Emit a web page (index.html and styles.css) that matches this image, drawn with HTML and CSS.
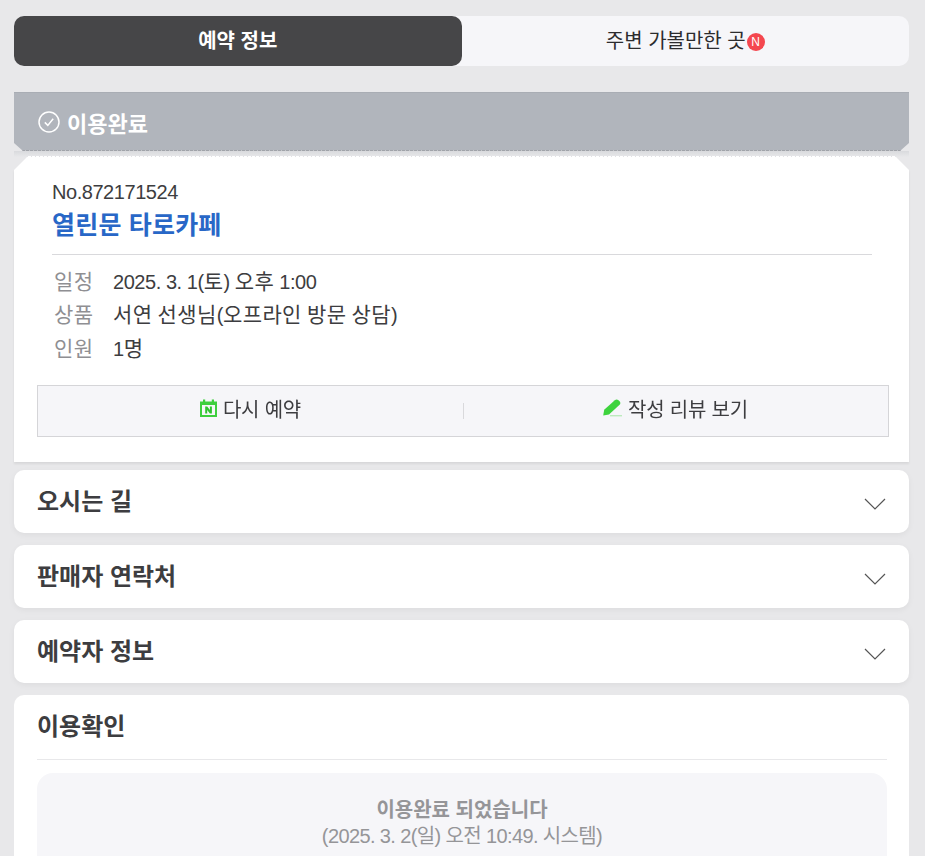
FILE: index.html
```html
<!DOCTYPE html>
<html lang="ko">
<head>
<meta charset="utf-8">
<title>예약 정보</title>
<link rel="stylesheet" href="styles.css">
</head>
<body>
<div class="page">
  <nav class="tabs">
    <a class="tab tab-on">예약 정보</a>
    <a class="tab">주변 가볼만한 곳<span class="new">N</span></a>
  </nav>

  <div class="status">
    <svg class="status-icon" width="22" height="22" viewBox="0 0 22 22" fill="none" stroke="#fff" stroke-width="1.5"><circle cx="11" cy="11" r="10"/><path d="M6.800 11.400l3 3 5.400-6.600"/></svg>
    <span>이용완료</span>
  </div>
  <div class="perforation"></div>

  <div class="ticket-wrap">
    <section class="ticket">
      <div class="ticket-head">
        <div class="number">No.872171524</div>
        <h1 class="shop">열린문 타로카페</h1>
      </div>
      <dl class="info">
        <div class="info-row"><dt>일정</dt><dd>2025. 3. 1(<span class="ko">토</span>) <span class="ko">오후</span> 1:00</dd></div>
        <div class="info-row"><dt>상품</dt><dd><span class="ko">서연</span> <span class="ko">선생님</span>(<span class="ko">오프라인</span> <span class="ko">방문</span> <span class="ko">상담</span>)</dd></div>
        <div class="info-row"><dt>인원</dt><dd>1<span class="ko">명</span></dd></div>
      </dl>
      <div class="actions">
        <a class="action">
          <svg width="17" height="18" viewBox="0 0 17 18"><path fill="#3ecf3e" d="M0 2.500h3V0.500h2.200v2h6.600V0.500H14v2h3V18H0z"/><rect x="2" y="6" width="13" height="10" fill="#f6f6f9"/><path fill="#2fc42f" d="M5.200 7.600h2l2.700 3.500V7.600h2v7h-2L7.200 11v3.600h-2z"/></svg>
          <span>다시 예약</span>
        </a>
        <a class="action">
          <svg width="19" height="18" viewBox="0 0 19 18"><path fill="#3ed33e" d="M0.200 16.500L1.200 10.800 11.800 1.200Q13.500 -.2 15.200 1L16.800 2.500Q18 4.200 16.600 5.800L6 15.400z"/><rect x="7" y="16.300" width="12" height="1" fill="#a6e6a6"/></svg>
          <span>작성 리뷰 보기</span>
        </a>
      </div>
    </section>
  </div>

  <section class="fold"><h2>오시는 길</h2><svg class="chev" width="22" height="12" viewBox="0 0 22 12" fill="none" stroke="#555" stroke-width="1.200"><path d="M1 1l10 10L21 1"/></svg></section>
  <section class="fold"><h2>판매자 연락처</h2><svg class="chev" width="22" height="12" viewBox="0 0 22 12" fill="none" stroke="#555" stroke-width="1.200"><path d="M1 1l10 10L21 1"/></svg></section>
  <section class="fold"><h2>예약자 정보</h2><svg class="chev" width="22" height="12" viewBox="0 0 22 12" fill="none" stroke="#555" stroke-width="1.200"><path d="M1 1l10 10L21 1"/></svg></section>

  <section class="confirm">
    <h2>이용확인</h2>
    <div class="confirm-box">
      <strong>이용완료 되었습니다</strong>
      <p>(2025. 3. 2(일) 오전 10:49. 시스템)</p>
    </div>
  </section>
</div>
</body>
</html>
```

FILE: styles.css
```css
* { box-sizing: border-box; }
html, body { margin: 0; height: 856px; overflow: hidden; }
body {
  background: #e8e8ea;
  font-family: "Liberation Sans", "Noto Sans CJK KR", sans-serif;
  color: #3d3d40;
}
.page { padding: 16px 16px 0 14px; }

.tabs { display: flex; height: 50px; background: #f6f6f9; border-radius: 10px; }
.tab {
  flex: 1; display: flex; align-items: center; justify-content: center;
  padding-bottom: 3px;
  font-size: 20px; color: #2c2c2e; border-radius: 10px;
}
.tab-on { background: #464648; color: #fff; font-weight: 700; }
.new {
  width: 18px; height: 18px; margin-left: 1px; margin-top: 5px; border-radius: 50%;
  background: #f4474f; color: #fff; font-size: 12px; line-height: 18px; text-align: center;
}

.status {
  position: relative;
  margin-top: 26px; height: 59px; padding: 0 24px;
  display: flex; align-items: center; gap: 7px;
  background: #b1b5bc; border-top: 1px solid #a9adb4;
  color: #fff; font-size: 22px; font-weight: 700;
  clip-path: polygon(0 0, 100% 0, 100% 51px, calc(100% - 9px) 100%, 9px 100%, 0 51px);
}
.status::after {
  content: ""; position: absolute; left: 0; right: 0; bottom: 0; height: 1px;
  background: repeating-linear-gradient(90deg, #a0a3a9 0 3px, #c4c6ca 3px 4px);
}
.status-icon { flex: none; }
.perforation {
  display: flex; align-items: flex-end; height: 6px; padding: 0 14px;
  background: linear-gradient(#d9dadd, #e8e8ea);
}
.perforation::after {
  content: ""; flex: 1; height: 1px;
  background: repeating-linear-gradient(90deg, #fff 0 3px, #e2e2e5 3px 4px);
}

.ticket-wrap { filter: drop-shadow(0 2px 1px rgba(0,0,0,.07)); }
.ticket {
  height: 305px; padding: 25px 20px 0 23px; background: #fff;
  clip-path: polygon(13px 0, calc(100% - 13px) 0, 100% 13px, 100% 100%, 0 100%, 0 13px);
  position: relative;
}
.ticket-head { margin: 0 17px 0 15px; padding-bottom: 13px; border-bottom: 1px solid #d9d9dc; }
.number { font-size: 20px; line-height: 21px; letter-spacing: -0.45px; }
.shop { margin: 6px 0 0; font-size: 25px; line-height: 32px; font-weight: 700; color: #2867c7; letter-spacing: .2px; }
.info { margin: 9px 0 0 15px; }
.info-row { display: flex; height: 33.500px; align-items: center; padding-bottom: 2px; font-size: 20px; letter-spacing: -0.45px; }
.info-row dt { width: 61px; padding-left: 2px; color: #8f8f93; margin: 0; font-size: 21px; letter-spacing: .4px; }
.info-row dd { margin: 0; }
.ko { font-size: 21px; letter-spacing: .4px; }
.actions {
  display: flex; position: absolute; left: 23px; right: 20px; top: 228px; height: 52px;
  background: #f6f6f9; border: 1px solid #d5d5d8;
}
.action {
  flex: 1; display: flex; align-items: center; justify-content: center; gap: 6px;
  padding-bottom: 6px;
  font-size: 20px; letter-spacing: -0.2px; position: relative;
}
.action + .action::before {
  content: ""; position: absolute; left: 0; top: 17px; height: 16px; width: 1px; background: #d9d9dc;
}

.fold {
  margin-top: 12px; height: 63px; padding: 0 23px;
  display: flex; align-items: center; justify-content: space-between;
  background: #fff; border-radius: 10px; box-shadow: 0 2px 6px rgba(0,0,0,.05);
}
.ticket-wrap + .fold { margin-top: 8px; }
.fold h2, .confirm h2 { margin: 0; font-size: 24px; font-weight: 700; color: #3d3d40; }
.fold h2 { padding-bottom: 4px; }
.chev { flex: none; margin-top: 4px; }

.confirm { margin-top: 12px; padding: 0 22px 0 23px; background: #fff; border-radius: 10px; height: 220px; }
.confirm h2 { height: 65px; line-height: 64px; border-bottom: 1px solid #e8e8ea; }
.confirm-box {
  margin-top: 13px; padding: 24px 0; text-align: center; background: #f6f6f9; border-radius: 16px;
  color: #959598; font-size: 20px;
}
.confirm-box strong { display: block; line-height: 26px; }
.confirm-box p { margin: 0; line-height: 27px; letter-spacing: -0.62px; }
```
